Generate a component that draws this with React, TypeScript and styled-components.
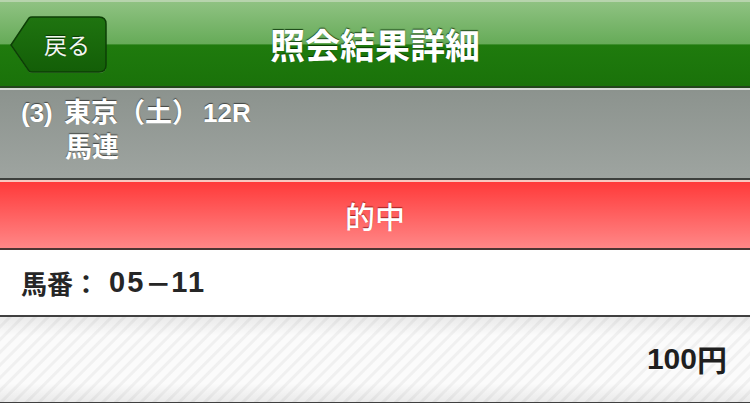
import React from "react";
import styled, { createGlobalStyle } from "styled-components";

const GlobalStyle = createGlobalStyle`
  html, body {
    margin: 0;
    padding: 0;
    background: #ffffff;
  }
  body {
    font-family: "Liberation Sans", "Noto Sans CJK JP", sans-serif;
  }
`;

const Page = styled.div`
  width: 750px;
  height: 403px;
  display: flex;
  flex-direction: column;
  overflow: hidden;
`;

const NavBar = styled.header`
  flex: none;
  height: 84px;
  border-top: 2px solid #b7d4ad;
  border-bottom: 2px solid #23451c;
  background: linear-gradient(
    to bottom,
    #8fc282 0%,
    #66ab58 50%,
    #1f7b0d 51%,
    #1a720a 100%
  );
  display: flex;
  align-items: center;
  justify-content: center;
  position: relative;
`;

const Title = styled.h1`
  margin: 0 0 2px 0;
  font-family: "Noto Sans CJK JP", sans-serif;
  font-size: 35px;
  font-weight: 700;
  color: #ffffff;
  text-shadow: 0 -1px 1px rgba(0, 40, 0, 0.8);
`;

const BackButton = styled.button`
  position: absolute;
  left: 10px;
  top: 13px;
  width: 98px;
  height: 59px;
  padding: 0 0 2px 16px;
  border: none;
  background: none;
  display: flex;
  align-items: center;
  justify-content: center;
  font-family: "Noto Sans CJK JP", sans-serif;
  font-size: 23px;
  color: #f2f7f0;
  text-shadow: 0 -1px 1px rgba(0, 30, 0, 0.7);
  cursor: pointer;

  svg {
    position: absolute;
    inset: 0;
  }

  span {
    position: relative;
  }
`;

const InfoPanel = styled.section`
  flex: none;
  height: 80px;
  border-top: 2px solid #d6dbd6;
  border-bottom: 2px solid #3d403d;
  background: linear-gradient(to bottom, #8c938e, #9ea4a0);
  padding: 0 21px 8px;
  display: flex;
  flex-direction: column;
  justify-content: center;
  gap: 0;
  color: #ffffff;
  text-shadow: 0 -1px 1px rgba(0, 0, 0, 0.55);
  font-size: 26px;
  font-weight: 700;
`;

const InfoLine = styled.div<{ indent?: boolean }>`
  height: 35px;
  line-height: 35px;
  padding-left: ${(p) => (p.indent ? "44px" : "0")};
  white-space: pre;
`;

const Jp = styled.span<{ size?: number; spaced?: boolean }>`
  display: inline-block;
  line-height: 1.15;
  font-family: "Noto Sans CJK JP", sans-serif;
  font-weight: 700;
  letter-spacing: 0;
  font-size: ${(p) => (p.size ? `${p.size}px` : "inherit")};
  margin: ${(p) => (p.spaced ? "0 4px 0 4px" : "0")};
`;

const ResultBar = styled.section`
  flex: none;
  height: 66px;
  border-top: 2px solid #f8c8c0;
  border-bottom: 2px solid #4b3533;
  background: linear-gradient(to bottom, #ff3a3a, #ff8787);
  display: flex;
  align-items: center;
  justify-content: center;
  font-family: "Noto Sans CJK JP", sans-serif;
  font-size: 30px;
  font-weight: 500;
  color: #ffffff;
  text-shadow: 0 -1px 1px rgba(120, 0, 0, 0.7);
`;

const NumberRow = styled.section`
  flex: none;
  height: 65px;
  border-bottom: 2px solid #404040;
  background: #ffffff;
  display: flex;
  align-items: center;
  padding: 0 21px;
  font-size: 29px;
  font-weight: 700;
  letter-spacing: 2px;
  color: #262626;
  white-space: pre;
`;

const AmountRow = styled.section`
  flex: none;
  height: 83px;
  border-bottom: 3px solid #404040;
  background:
    linear-gradient(
      to bottom,
      rgba(0, 0, 0, 0.07) 0%,
      rgba(0, 0, 0, 0) 22%,
      rgba(0, 0, 0, 0) 78%,
      rgba(0, 0, 0, 0.07) 100%
    ),
    repeating-linear-gradient(
      135deg,
      #fbfbfb 0px,
      #fbfbfb 5px,
      #f0f0f0 6px,
      #f0f0f0 8px,
      #fbfbfb 9px
    );
  display: flex;
  align-items: center;
  justify-content: flex-end;
  padding: 0 23px 2px 0;
  font-size: 30px;
  font-weight: 700;
  color: #1f1f1f;
  text-shadow: 0 1px 0 #ffffff;
`;

export default function App() {
  return (
    <>
      <GlobalStyle />
      <Page>
        <NavBar>
          <BackButton>
            <svg width="98" height="59" viewBox="0 0 98 59">
              <defs>
                <linearGradient id="backFill" x1="0" y1="0" x2="0" y2="1">
                  <stop offset="0" stopColor="#1f7410" />
                  <stop offset="1" stopColor="#135e07" />
                </linearGradient>
              </defs>
              <path
                d="M1 31 L19 4 Q20 3 22 3 L89 3 Q96 3 96 10 L96 52 Q96 58 89 58 L22 58 Q20 58 19 57 Z"
                fill="#5e9b52"
              />
              <path
                d="M1 30 L19 3 Q20 2 22 2 L89 2 Q96 2 96 9 L96 50 Q96 57 89 57 L22 57 Q20 57 19 56 Z"
                fill="url(#backFill)"
                stroke="#0d3f06"
                strokeWidth="1.5"
              />
            </svg>
            <span>戻る</span>
          </BackButton>
          <Title>照会結果詳細</Title>
        </NavBar>
        <InfoPanel>
          <InfoLine>
            (3) <Jp size={27} spaced>東京（土）</Jp>12R
          </InfoLine>
          <InfoLine indent>
            <Jp size={27}>馬連</Jp>
          </InfoLine>
        </InfoPanel>
        <ResultBar>的中</ResultBar>
        <NumberRow>
          <Jp size={26}>馬番：</Jp> 05<Jp size={26}>－</Jp>11
        </NumberRow>
        <AmountRow>
          100<Jp>円</Jp>
        </AmountRow>
      </Page>
    </>
  );
}
